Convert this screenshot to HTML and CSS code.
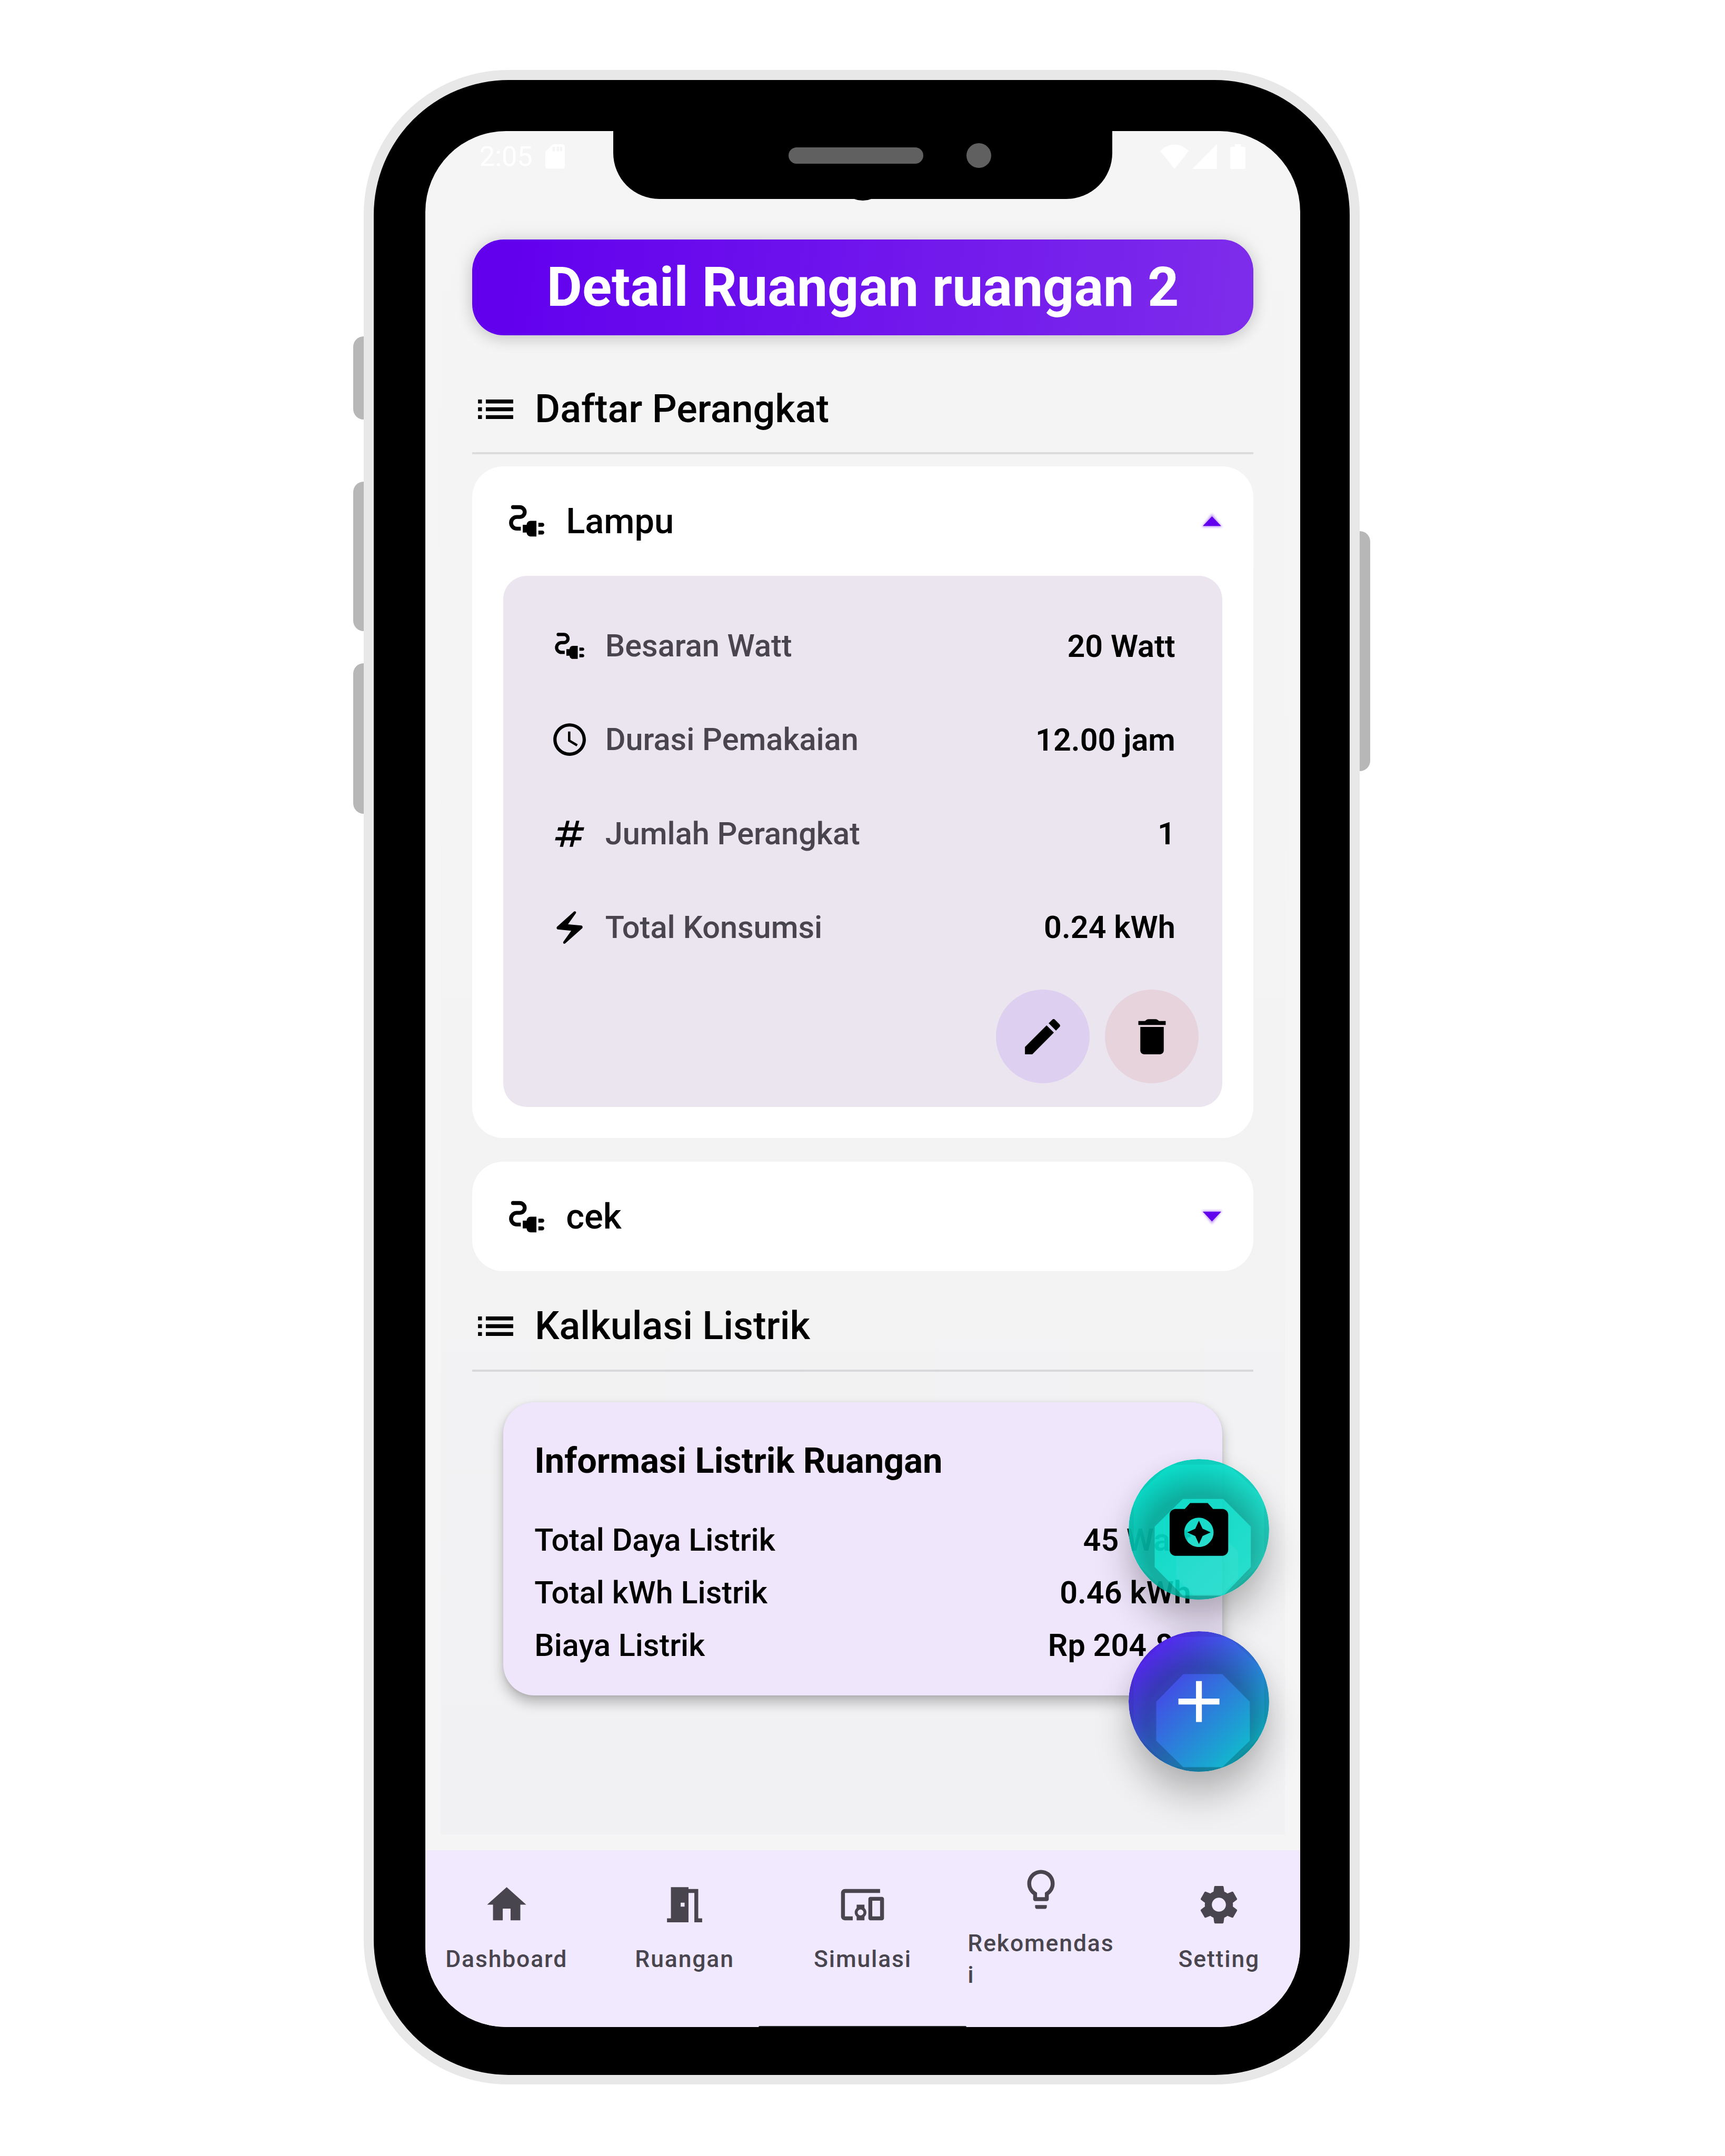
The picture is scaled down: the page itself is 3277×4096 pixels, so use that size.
FILE: index.html
```html
<!DOCTYPE html>
<html lang="id">
<head>
<meta charset="utf-8">
<title>Detail Ruangan</title>
<link rel="stylesheet" href="styles.css">
</head>
<body>
<svg class="defs" aria-hidden="true">
  <symbol id="i-list" viewBox="0 0 24 24"><path d="M3 13h2v-2H3v2zm0 4h2v-2H3v2zm0-8h2V7H3v2zm4 4h14v-2H7v2zm0 4h14v-2H7v2zM7 7v2h14V7H7z"/></symbol>
  <symbol id="i-plug" viewBox="0 0 24 24"><path d="M5 5h3.5a2.5 2.5 0 0 1 0 5H7a3 3 0 0 0 0 6h2" fill="none" stroke="currentColor" stroke-width="2"/><circle cx="5" cy="5" r="1"/><path d="M12 14h-2v4h2c0 1.1.9 2 2 2h3v-8h-3c-1.1 0-2 .9-2 2zM20 13h-2v2h2c.55 0 1-.45 1-1s-.45-1-1-1zM20 17h-2v2h2c.55 0 1-.45 1-1s-.45-1-1-1z"/></symbol>
  <symbol id="i-clock" viewBox="0 0 24 24"><path d="M11.99 2C6.47 2 2 6.48 2 12s4.47 10 9.99 10C17.52 22 22 17.52 22 12S17.52 2 11.99 2zM12 20c-4.42 0-8-3.58-8-8s3.58-8 8-8 8 3.58 8 8-3.58 8-8 8zm.5-13H11v6l5.25 3.15.75-1.23-4.5-2.67z"/></symbol>
  <symbol id="i-hash" viewBox="0 0 24 24"><path d="M20.5 10l.5-2h-4l1-4h-2l-1 4h-4l1-4h-2L9 8H5l-.5 2h4l-1 4h-4L3 16h4l-1 4h2l1-4h4l-1 4h2l1-4h4l.5-2h-4l1-4h4zm-7 4h-4l1-4h4l-1 4z"/></symbol>
  <symbol id="i-bolt" viewBox="0 0 24 24"><path d="M14.69 2.21L4.33 11.49c-.64.58-.28 1.65.58 1.73L13 14l-4.85 6.76c-.22.31-.19.74.08 1.01.3.3.77.31 1.08.02l10.36-9.28c.64-.58.28-1.65-.58-1.73L11 10l4.85-6.76c.22-.31.19-.74-.08-1.01-.3-.3-.77-.31-1.08-.02z"/></symbol>
  <symbol id="i-edit" viewBox="0 0 24 24"><path d="M3 17.25V21h3.75L17.81 9.94l-3.75-3.75L3 17.25zM20.71 7.04c.39-.39.39-1.02 0-1.41l-2.34-2.34c-.39-.39-1.02-.39-1.41 0l-1.83 1.83 3.75 3.75 1.83-1.83z"/></symbol>
  <symbol id="i-trash" viewBox="0 0 24 24"><path d="M6 19c0 1.1.9 2 2 2h8c1.1 0 2-.9 2-2V7H6v12zM19 4h-3c-.3 0-.6-.1-.9-.4-.4-.4-.7-.6-1.3-.6h-3.600c-.6 0-.9.2-1.300.6-.3.3-.6.4-.9.4H5v2h14V4z"/></symbol>
  <symbol id="i-home" viewBox="0 0 24 24"><path d="M10 20v-6h4v6h5v-8h3L12 3 2 12h3v8z"/></symbol>
  <symbol id="i-door" viewBox="0 0 24 24"><path d="M14 6v15H3v-2h2V3h9v1h5v15h2v2h-4V6h-3zm-4 5v2h2v-2h-2z"/></symbol>
  <symbol id="i-devices" viewBox="0 0 24 24"><path d="M3 6h18V4H3c-1.100 0-2 .9-2 2v12c0 1.100.9 2 2 2h4v-2H3V6zm10 6H9v1.780c-.61.55-1 1.330-1 2.220s.39 1.670 1 2.220V20h4v-1.780c.61-.55 1-1.340 1-2.220s-.39-1.670-1-2.220V12zm-2 5.500c-.83 0-1.500-.67-1.500-1.500s.67-1.500 1.500-1.500 1.500.67 1.500 1.500-.67 1.500-1.500 1.500zM22 8h-6c-.5 0-1 .5-1 1v10c0 .5.5 1 1 1h6c.5 0 1-.5 1-1V9c0-.5-.5-1-1-1zm-1 10h-4v-8h4v8z"/></symbol>
  <symbol id="i-bulb" viewBox="0 0 24 24"><path d="M9 21c0 .55.45 1 1 1h4c.55 0 1-.45 1-1v-1H9v1zm3-19C8.14 2 5 5.140 5 9c0 2.380 1.190 4.470 3 5.740V17c0 .55.45 1 1 1h6c.55 0 1-.45 1-1v-2.260c1.810-1.270 3-3.360 3-5.740 0-3.860-3.140-7-7-7zm2.850 11.100l-.85.6V16h-4v-2.300l-.85-.6A4.997 4.997 0 0 1 7 9c0-2.760 2.240-5 5-5s5 2.240 5 5c0 1.630-.8 3.160-2.150 4.100z"/></symbol>
  <symbol id="i-gear" viewBox="0 0 24 24"><path d="M19.14 12.94c.04-.3.06-.61.06-.94 0-.32-.02-.64-.07-.94l2.03-1.58c.18-.14.23-.41.12-.61l-1.92-3.32c-.12-.22-.37-.29-.59-.22l-2.39.96c-.5-.38-1.03-.7-1.62-.94l-.36-2.54c-.04-.24-.24-.41-.48-.41h-3.84c-.24 0-.43.17-.47.41l-.36 2.54c-.59.24-1.13.57-1.62.94l-2.39-.96c-.22-.08-.47 0-.59.22L2.74 8.87c-.12.21-.08.47.12.61l2.03 1.58c-.05.3-.09.63-.09.94s.02.64.07.94l-2.03 1.58c-.18.14-.23.41-.12.61l1.92 3.32c.12.22.37.29.59.22l2.39-.96c.5.38 1.03.7 1.62.94l.36 2.54c.05.24.24.41.48.41h3.84c.24 0 .44-.17.47-.41l.36-2.54c.59-.24 1.13-.56 1.62-.94l2.39.96c.22.08.47 0 .59-.22l1.92-3.32c.12-.22.07-.47-.12-.61l-2.01-1.58zM12 15.6c-1.98 0-3.6-1.62-3.6-3.6s1.62-3.6 3.6-3.6 3.6 1.62 3.6 3.6-1.62 3.6-3.6 3.6z"/></symbol>
  <linearGradient id="g-teal" x1="0" y1="0" x2="1" y2="1"><stop offset=".1" stop-color="#03dac5" stop-opacity=".98"/><stop offset=".9" stop-color="#03dac5" stop-opacity=".84"/></linearGradient>
  <linearGradient id="g-blue" x1="0" y1="0" x2="1" y2="1"><stop offset=".08" stop-color="#5a18f0"/><stop offset=".86" stop-color="#10bccd"/></linearGradient>
  <radialGradient id="g-shade" gradientUnits="userSpaceOnUse" cx="137.500" cy="172" r="162"><stop offset=".64" stop-color="#000" stop-opacity=".2"/><stop offset=".78" stop-color="#000" stop-opacity=".12"/><stop offset="1" stop-color="#000" stop-opacity="0"/></radialGradient>
</svg>

<main class="device">
  <span class="key key-mute"></span>
  <span class="key key-up"></span>
  <span class="key key-down"></span>
  <span class="key key-power"></span>

  <div class="bezel">
    <div class="screen">
      <header class="status">
        <span class="time">2:05</span>
        <svg class="sd" viewBox="0 0 38 48"><path fill-rule="evenodd" d="M15 0h18q5 0 5 5v38q0 5-5 5H5q-5 0-5-5V15zM14 5v9h5V5zM22 5v9h5V5zM29 5v9h4V5z"/></svg>
        <svg class="signals" viewBox="0 0 168 49"><path d="M0 13Q28-12 56 13L28 48.500zM62 49L111 0v49zM137 9q0-4 4-4h5V0h12v5h5q4 0 4 4v36q0 4-4 4h-22q-4 0-4-4z"/></svg>
      </header>

      <section class="content">
        <h1 class="title">Detail Ruangan ruangan 2</h1>

        <h2 class="section"><svg class="icon"><use href="#i-list"/></svg>Daftar Perangkat</h2>

        <article class="card card-open">
          <div class="card-head"><svg class="icon"><use href="#i-plug"/></svg><span>Lampu</span><svg class="caret" viewBox="0 0 40 24"><path class="glow" d="M0 24L20-2l20 26z"/><path d="M2 22L20 3l18 19z"/></svg></div>
          <div class="panel">
            <dl class="specs">
              <div class="spec"><svg class="icon"><use href="#i-plug"/></svg><dt>Besaran Watt</dt><dd>20 Watt</dd></div>
              <div class="spec"><svg class="icon"><use href="#i-clock"/></svg><dt>Durasi Pemakaian</dt><dd>12.00 jam</dd></div>
              <div class="spec"><svg class="icon"><use href="#i-hash"/></svg><dt>Jumlah Perangkat</dt><dd>1</dd></div>
              <div class="spec"><svg class="icon"><use href="#i-bolt"/></svg><dt>Total Konsumsi</dt><dd>0.24 kWh</dd></div>
            </dl>
            <div class="actions">
              <button class="round edit"><svg class="icon"><use href="#i-edit"/></svg></button>
              <button class="round remove"><svg class="icon"><use href="#i-trash"/></svg></button>
            </div>
          </div>
        </article>

        <article class="card">
          <div class="card-head"><svg class="icon"><use href="#i-plug"/></svg><span>cek</span><svg class="caret" viewBox="0 0 40 24"><path class="glow" d="M0 0l20 26L40 0z"/><path d="M2 2l18 19L38 2z"/></svg></div>
        </article>

        <h2 class="section section-calc"><svg class="icon"><use href="#i-list"/></svg>Kalkulasi Listrik</h2>

        <article class="info">
          <h3>Informasi Listrik Ruangan</h3>
          <p><span>Total Daya Listrik</span><span>45 Watt</span></p>
          <p><span>Total kWh Listrik</span><span>0.46 kWh</span></p>
          <p><span>Biaya Listrik</span><span>Rp 204.84</span></p>
        </article>
      </section>

      <nav class="nav">
        <a class="tab"><svg class="icon"><use href="#i-home"/></svg><span>Dashboard</span></a>
        <a class="tab"><svg class="icon"><use href="#i-door"/></svg><span>Ruangan</span></a>
        <a class="tab"><svg class="icon"><use href="#i-devices"/></svg><span>Simulasi</span></a>
        <a class="tab"><svg class="icon"><use href="#i-bulb"/></svg><span>Rekomendas<br>i</span></a>
        <a class="tab"><svg class="icon"><use href="#i-gear"/></svg><span>Setting</span></a>
      </nav>

      <div class="fabs">
        <svg class="fab" viewBox="0 0 275 275">
          <circle cx="137.500" cy="137.500" r="137.500" fill="url(#g-teal)"/>
          <path fill-rule="evenodd" fill="#000" fill-opacity=".05" d="M137.500 0a137.500 137.500 0 0 1 0 275a137.500 137.500 0 0 1 0-275zM80 11L10 77v121l70 67h115l70-67V77L195 11z"/>
          <path fill-rule="evenodd" fill="url(#g-shade)" d="M137.500 0a137.500 137.500 0 0 1 0 275a137.500 137.500 0 0 1 0-275zM106 78l-55 54v79l55 56h79l54-56v-79l-54-54z"/>
          <path fill="#fff" fill-opacity=".05" d="M128 146h51l35 35v51l-35 35h-51l-35-35v-51z"/>
          <path transform="translate(68.750 68.750) scale(5.730)" d="M9 3L7.170 5H4c-1.100 0-2 .9-2 2v12c0 1.100.9 2 2 2h16c1.100 0 2-.9 2-2V7c0-1.100-.9-2-2-2h-3.170L15 3H9zm3 15c-2.760 0-5-2.240-5-5s2.240-5 5-5 5 2.240 5 5-2.240 5-5 5z"/>
          <path transform="translate(68.750 68.750) scale(5.730)" d="M12 17l1.250-2.750L16 13l-2.750-1.250L12 9l-1.250 2.750L8 13l2.750 1.250z"/>
        </svg>
        <svg class="fab" viewBox="0 0 275 275">
          <circle cx="137.500" cy="137.500" r="137.500" fill="url(#g-blue)"/>
          <path fill-rule="evenodd" fill="#000" fill-opacity=".06" d="M137.500 0a137.500 137.500 0 0 1 0 275a137.500 137.500 0 0 1 0-275zM80 11L10 77v121l70 67h115l70-67V77L195 11z"/>
          <path fill-rule="evenodd" fill="url(#g-shade)" d="M137.500 0a137.500 137.500 0 0 1 0 275a137.500 137.500 0 0 1 0-275zM107 84l-53 54v76l53 52h76l54-52v-76l-54-54z"/>
          <path fill="#fff" transform="translate(68.750 68.750) scale(5.730)" d="M19 13h-6v6h-2v-6H5v-2h6V5h2v6h6z"/>
        </svg>
      </div>

      <span class="gesture"></span>
    </div>
    <div class="notch"><span class="lens"></span><span class="speaker"></span><span class="camera"></span></div>
  </div>
</main>
</body>
</html>
```

FILE: styles.css
```css
/* 0.01rem = one design pixel */
html { font-size: 97.096px; }

* { box-sizing: border-box; margin: 0; padding: 0; }

body {
  width: 33.75rem;
  height: 42.18rem;
  padding: 1.37rem 0 0 7.12rem;
  overflow: hidden;
  background: #fff;
  color: #000;
  font-family: Roboto, "Liberation Sans", sans-serif;
}

.defs { position: absolute; width: 0; height: 0; }

.icon {
  flex: none;
  display: block;
  width: .917rem;
  height: .917rem;
  fill: currentColor;
}

/* device shell */
.device {
  position: relative;
  width: 19.48rem;
  height: 39.415rem;
  padding: .2rem .195rem .19rem;
  border-radius: 2.82rem;
  background: #e8e8e8;
}

.key {
  position: absolute;
  left: -.21rem;
  width: .21rem;
  background: #b7b7b7;
  border-radius: .21rem 0 0 .21rem;
}
.key-mute { top: 5.21rem; height: 1.63rem; }
.key-up { top: 8.05rem; height: 2.93rem; }
.key-down { top: 11.61rem; height: 2.94rem; }
.key-power {
  left: auto;
  right: -.21rem;
  top: 9.02rem;
  height: 4.7rem;
  border-radius: 0 .21rem .21rem 0;
}

.bezel {
  position: relative;
  height: 100%;
  padding: .99rem .965rem .931rem 1.005rem;
  border-radius: 2.64rem;
  background: #000;
}

.notch {
  position: absolute;
  top: .9rem;
  left: 4.685rem;
  display: flex;
  align-items: center;
  width: 9.76rem;
  height: 1.42rem;
  padding: 0 0 .27rem 3.43rem;
  border-radius: 0 0 .9rem .9rem;
  background: #000;
}
.lens {
  position: absolute;
  left: 4.43rem;
  bottom: -.03rem;
  width: .9rem;
  height: .9rem;
  border-radius: 50%;
  background: #000;
}
.speaker {
  position: relative;
  width: 2.64rem;
  height: .325rem;
  border-radius: .17rem;
  background: #606060;
}
.camera {
  position: relative;
  width: .485rem;
  height: .485rem;
  margin-left: .84rem;
  border-radius: 50%;
  background: #606060;
}

/* screen */
.screen {
  position: relative;
  display: flex;
  flex-direction: column;
  height: 100%;
  overflow: hidden;
  border-radius: 1.58rem;
  background: #f5f5f5;
}

.status {
  display: flex;
  align-items: center;
  height: 1.74rem;
  padding: 0 1.06rem .73rem 1.06rem;
  color: #fff;
}
.status svg { fill: #fff; }
.time { font-size: .54rem; line-height: 1; }
.sd { width: .38rem; height: .48rem; margin-left: .25rem; }
.signals { width: 1.68rem; height: .49rem; margin-left: auto; }

.content {
  flex: none;
  height: 31.594rem;
  margin: 0 .295rem 0 .305rem;
  padding: .385rem .62rem 0 .612rem;
  background: linear-gradient(#f5f5f5, #f1f1f3);
}

.title {
  height: 1.875rem;
  border-radius: .61rem;
  background: linear-gradient(97deg, #6200ee 5%, #7e2ceb);
  box-shadow: 0 .08rem .3rem rgba(0, 0, 0, .12), 0 0 .4rem rgba(0, 0, 0, .1);
  color: #fff;
  font-size: 1.07rem;
  font-weight: 700;
  line-height: 1.875rem;
  text-align: center;
}

.section {
  display: flex;
  gap: .31rem;
  height: 1.34rem;
  margin-top: .985rem;
  border-bottom: .045rem solid #dcdcdc;
  font-size: .76rem;
  font-weight: 500;
  line-height: .917rem;
}
.section-calc { margin-top: .617rem; border-color: #d8d8da; height: 1.346rem; }

.card {
  margin-top: .465rem;
  padding: 0 .61rem;
  border-radius: .61rem;
  background: #fff;
}
.card-open { margin-top: .238rem; padding-bottom: .61rem; }

.card-head {
  display: flex;
  align-items: center;
  gap: .31rem;
  height: 2.14rem;
  font-size: .688rem;
  font-weight: 500;
}
.caret { width: .4rem; height: .24rem; margin-left: auto; fill: #6200ee; overflow: visible; }
.glow { opacity: .4; filter: blur(2px); }

.panel {
  padding: .69rem .46rem .46rem;
  border-radius: .46rem;
  background: #ebe5f0;
}
.specs { display: grid; gap: .459rem; }
.spec {
  display: flex;
  align-items: center;
  height: 1.376rem;
  padding: 0 .46rem;
  border-radius: .31rem;
  background: #eae5ef;
  font-size: .6125rem;
  font-weight: 500;
}
.spec .icon { width: .764rem; height: .764rem; }
.spec dt { margin-left: .31rem; color: #49454f; }
.spec dd { margin-left: auto; font-size: .611rem; font-weight: 600; }

.actions { display: flex; justify-content: flex-end; gap: .306rem; margin-top: .532rem; }
.round {
  display: grid;
  place-items: center;
  width: 1.834rem;
  height: 1.834rem;
  border: 0;
  border-radius: 50%;
  color: #000;
}
.edit { background: #ddcff0; }
.remove { background: #e6d3db; }

.info {
  margin: .6rem .61rem 0;
  padding: .61rem .61rem .46rem;
  border-radius: .61rem;
  background: #efe6fb;
  box-shadow: 0 .14rem .24rem rgba(0, 0, 0, .25), 0 .02rem .08rem rgba(0, 0, 0, .08);
}
.info h3 { margin-bottom: .485rem; font-size: .688rem; font-weight: 700; line-height: 1.09rem; }
.info p {
  display: flex;
  justify-content: space-between;
  font-size: .611rem;
  font-weight: 500;
  line-height: 1.032rem;
}
.info p span:last-child { font-weight: 600; }

/* floating actions */
.fabs {
  position: absolute;
  left: 13.76rem;
  top: 25.99rem;
  display: grid;
  gap: .617rem;
}
.fab {
  display: block;
  width: 2.752rem;
  height: 2.752rem;
  border-radius: 50%;
  box-shadow: 0 .48rem .7rem rgba(0, 0, 0, .24), 0 .05rem .4rem rgba(0, 0, 0, .05);
}

/* bottom navigation */
.nav {
  display: flex;
  gap: .306rem;
  flex: 1;
  margin-top: .306rem;
  padding-bottom: .405rem;
  background: #f1e9fe;
  color: #49454f;
}
.tab {
  flex: 1 1 0;
  display: flex;
  flex-direction: column;
  align-items: center;
  justify-content: center;
  gap: .306rem;
  font-size: .4584rem;
  font-weight: 500;
  letter-spacing: .019rem;
  line-height: .611rem;
}

.gesture {
  position: absolute;
  left: 6.52rem;
  bottom: 0;
  width: 4.07rem;
  height: .025rem;
  border-radius: .025rem .025rem 0 0;
  background: #222;
}
```
